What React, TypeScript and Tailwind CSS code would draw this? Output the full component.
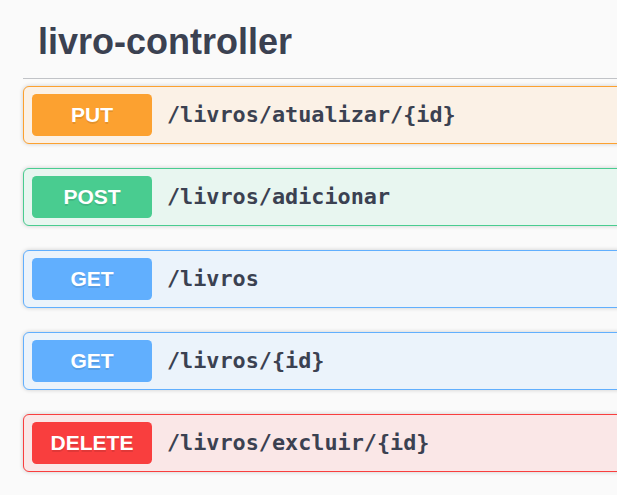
const ops = [
  {
    method: "PUT",
    path: "/livros/atualizar/{id}",
    box: "border-[#fca130] bg-[#fbf1e6]",
    badge: "bg-[#fca130]",
  },
  {
    method: "POST",
    path: "/livros/adicionar",
    box: "border-[#49cc90] bg-[#e8f6f0]",
    badge: "bg-[#49cc90]",
  },
  {
    method: "GET",
    path: "/livros",
    box: "border-[#61affe] bg-[#ebf3fb]",
    badge: "bg-[#61affe]",
  },
  {
    method: "GET",
    path: "/livros/{id}",
    box: "border-[#61affe] bg-[#ebf3fb]",
    badge: "bg-[#61affe]",
  },
  {
    method: "DELETE",
    path: "/livros/excluir/{id}",
    box: "border-[#f93e3e] bg-[#fae7e7]",
    badge: "bg-[#f93e3e]",
  },
];

export default function App() {
  return (
    <div className="w-[617px] h-[495px] overflow-hidden bg-[#fafafa] font-['Liberation_Sans',Arial,sans-serif] text-[#3b4151]">
      <div className="w-[720px] pl-[23px] pt-[6px]">
        {/* tag title */}
        <h3 className="pl-[15px] pt-[15px] pb-[16px] text-[36px] font-bold leading-[41px] border-b border-[#c1c3c7] mb-[7px]">
          livro-controller
        </h3>

        {/* operations */}
        <div className="flex flex-col gap-[24px]">
          {ops.map((op, i) => (
            <div
              key={i}
              className={`flex items-center border rounded-[6px] px-[8px] py-[7px] shadow-[0_0_4.5px_rgba(0,0,0,0.19)] ${op.box}`}
            >
              <span
                className={`w-[120px] h-[42px] flex items-center justify-center rounded-[4.5px] text-white text-[21px] font-bold [text-shadow:0_1.5px_0_rgba(0,0,0,0.1)] ${op.badge}`}
              >
                {op.method}
              </span>
              <span className="pl-[15px] font-['DejaVu_Sans_Mono',monospace] font-bold text-[21.8px] text-[#3b4151]">
                {op.path}
              </span>
            </div>
          ))}
        </div>
      </div>
    </div>
  );
}
